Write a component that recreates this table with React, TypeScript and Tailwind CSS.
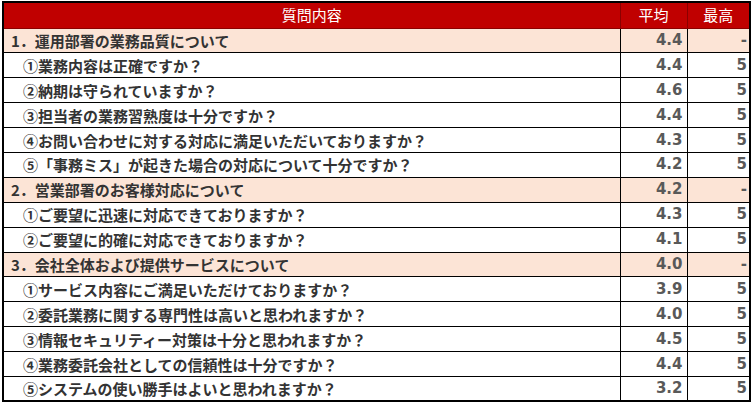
import React from 'react'

type Row = { label: string; avg: string; max: string; category?: boolean }

const rows: Row[] = [
  { label: '1．運用部署の業務品質について', avg: '4.4', max: '-', category: true },
  { label: '①業務内容は正確ですか？', avg: '4.4', max: '5' },
  { label: '②納期は守られていますか？', avg: '4.6', max: '5' },
  { label: '③担当者の業務習熟度は十分ですか？', avg: '4.4', max: '5' },
  { label: '④お問い合わせに対する対応に満足いただいておりますか？', avg: '4.3', max: '5' },
  { label: '⑤「事務ミス」が起きた場合の対応について十分ですか？', avg: '4.2', max: '5' },
  { label: '2．営業部署のお客様対応について', avg: '4.2', max: '-', category: true },
  { label: '①ご要望に迅速に対応できておりますか？', avg: '4.3', max: '5' },
  { label: '②ご要望に的確に対応できておりますか？', avg: '4.1', max: '5' },
  { label: '3．会社全体および提供サービスについて', avg: '4.0', max: '-', category: true },
  { label: '①サービス内容にご満足いただけておりますか？', avg: '3.9', max: '5' },
  { label: '②委託業務に関する専門性は高いと思われますか？', avg: '4.0', max: '5' },
  { label: '③情報セキュリティー対策は十分と思われますか？', avg: '4.5', max: '5' },
  { label: '④業務委託会社としての信頼性は十分ですか？', avg: '4.4', max: '5' },
  { label: '⑤システムの使い勝手はよいと思われますか？', avg: '3.2', max: '5' },
]

const jp = "font-['Meiryo','Noto_Sans_CJK_JP',sans-serif]"
const num = "font-['Verdana','DejaVu_Sans',sans-serif]"

export default function App() {
  return (
    <div className="h-[407px] w-[752px] bg-white pl-[2px] pt-[1px]">
      <table className="w-[747px] table-fixed border-collapse border-2 border-black">
        <colgroup>
          <col className="w-[617px]" />
          <col className="w-[67px]" />
          <col className="w-[63px]" />
        </colgroup>
        <thead>
          <tr className="h-[26px] bg-[#c00000] text-[15px] text-white">
            <th className={`${jp} border border-[#8b0000] font-normal`}>質問内容</th>
            <th className={`${jp} border border-[#8b0000] font-normal`}>平均</th>
            <th className={`${jp} border border-[#8b0000] font-normal`}>最高</th>
          </tr>
        </thead>
        <tbody>
          {rows.map((r, i) => (
            <tr key={i} className={`h-[24.9px] ${r.category ? 'bg-[#fce4d6]' : 'bg-white'}`}>
              <td
                className={`${jp} border border-black py-0 text-[15px] font-bold leading-none text-[#333333] ${
                  r.category ? 'pl-[7px]' : 'pl-[19px]'
                }`}
              >
                {r.label}
              </td>
              <td className={`${num} border border-black py-0 pr-[4px] text-right text-[15px] font-bold leading-none text-[#595959]`}>
                {r.avg}
              </td>
              <td className={`${num} border border-black py-0 pr-[2px] text-right text-[15px] font-bold leading-none text-[#595959]`}>
                {r.max}
              </td>
            </tr>
          ))}
        </tbody>
      </table>
    </div>
  )
}
